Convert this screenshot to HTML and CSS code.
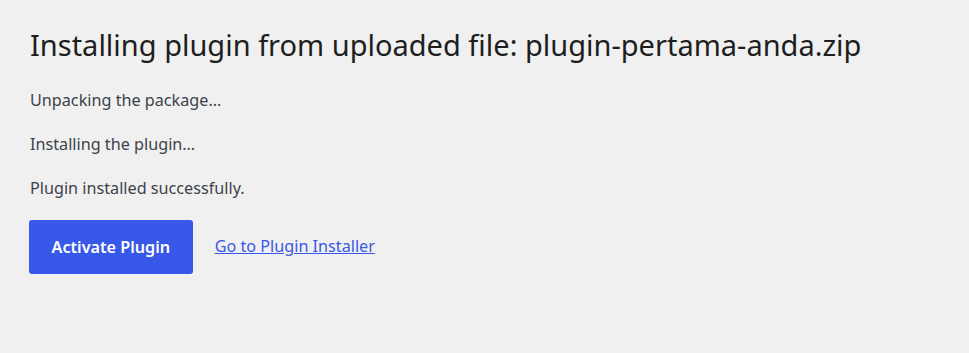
FILE: index.html
```html
<!DOCTYPE html>
<html lang="en">
<head>
    <meta charset="UTF-8">
    <title>Install Plugin</title>
    <link rel="stylesheet" href="styles.css">
</head>
<body>
    <div class="wrap">
        <h1>Installing plugin from uploaded file: plugin-pertama-anda.zip</h1>
        <p>Unpacking the package&hellip;</p>
        <p>Installing the plugin&hellip;</p>
        <p>Plugin installed successfully.</p>
        <p class="actions">
            <a class="button primary" href="#">Activate Plugin</a>
            <a class="link" href="#">Go to Plugin Installer</a>
        </p>
    </div>
</body>
</html>
```

FILE: styles.css
```css
body {
    margin: 0;
    background: #f0f0f0;
    font-family: "Noto Sans", "Open Sans", sans-serif;
    color: #3c434a;
}
.wrap {
    padding: 26px 30px;
}
h1 {
    font-size: 29px;
    font-weight: 400;
    color: #1e1e1e;
    margin: 0 0 26px;
    line-height: 1.3;
}
p {
    font-size: 16.2px;
    margin: 0 0 23px;
    line-height: 21px;
}
.actions {
    display: flex;
    align-items: center;
    gap: 22px;
    margin-top: -2px;
}
.button.primary {
    display: inline-block;
    background: #3858e9;
    color: #fff;
    font-weight: 600;
    text-decoration: none;
    border-radius: 3px;
    padding: 0 22.5px;
    height: 54px;
    line-height: 54px;
    margin-left: -1px;
}
.link {
    color: #3858e9;
}
```
